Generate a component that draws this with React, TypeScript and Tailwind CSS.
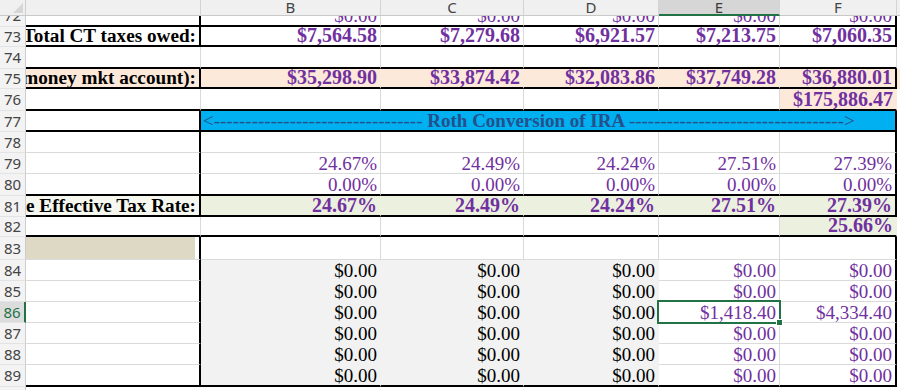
import React from "react";

const RT = "border-r border-r-[#dadada]";
const RK = "border-r-2 border-r-black";
const RF = "border-r border-r-transparent";
const BT = "border-b border-b-[#dadada]";
const BK = "border-b-2 border-b-black";
const BF = "border-b border-b-transparent";

const WA = "w-[175px]";
const WB = "w-[180px]";
const WC = "w-[143px]";
const WD = "w-[135px]";
const WE = "w-[121px]";
const WF = "w-[117px]";
const WG = "w-[3px]";

const PEACH = "bg-[#fde9d9]";
const GREEN = "bg-[#ebf1de]";
const GRAY = "bg-[#f2f2f2]";

type CellProps = {
  w: string;
  r: string;
  b: string;
  bg?: string;
  text?: string;
  bold?: boolean;
  label?: boolean;
  purple?: boolean;
  clip?: boolean;
  children?: React.ReactNode;
};

function Cell({ w, r, b, bg = "bg-white", text, bold, label, purple, clip = true, children }: CellProps) {
  const size = label ? "text-[19.2px] font-bold" : bold ? "text-[20px] font-bold" : "text-[19px] font-normal";
  return (
    <div
      className={`${w} ${r} ${b} ${bg} ${clip ? "overflow-hidden" : "overflow-visible"} relative shrink-0 h-full box-border flex items-end justify-end whitespace-nowrap pr-[3px] font-['Liberation_Serif','Times_New_Roman',serif]`}
    >
      {text && (
        <span className={`shrink-0 leading-[19px] ${size} ${purple ? "text-[#7030a0]" : "text-black"}`}>{text}</span>
      )}
      {children}
    </div>
  );
}

type RowProps = {
  n: string;
  h: string;
  sel?: boolean;
  clip?: boolean;
  children?: React.ReactNode;
};

function Row({ n, h, sel, clip, children }: RowProps) {
  const head = sel
    ? "bg-[#dcdcdc] border-r-2 border-r-[#217346] text-[#217346]"
    : "bg-[#f3f3f3] border-r border-r-[#cdcdcd] text-[#444444]";
  return (
    <div className={`flex ${h}`}>
      <div
        className={`w-[26px] shrink-0 h-full box-border flex justify-center overflow-hidden border-b border-b-[#e3e3e3] ${head} ${
          clip ? "items-end" : "items-center"
        }`}
      >
        <span className="shrink-0 h-[21px] leading-[21px] text-[15px] font-['Noto_Sans','Open_Sans',sans-serif]">
          {n}
        </span>
      </div>
      {children}
    </div>
  );
}

function G({ bg = "bg-white" }: { bg?: string }) {
  return <div className={`${WG} ${bg} shrink-0 h-full`} />;
}

const HEAD = [
  { w: WA, l: "", sel: false },
  { w: WB, l: "B", sel: false },
  { w: WC, l: "C", sel: false },
  { w: WD, l: "D", sel: false },
  { w: WE, l: "E", sel: true },
  { w: WF, l: "F", sel: false },
];

export default function App() {
  const dash = "-";
  return (
    <div className="w-[900px] h-[390px] overflow-hidden bg-white flex flex-col">
      {/* column header */}
      <div className="flex h-[16px] shrink-0">
        <div className="w-[26px] shrink-0 h-full box-border bg-[#f0f0f0] border-r border-r-[#cdcdcd] border-b border-b-[#c8c8c8]">
          <svg width="26" height="15" viewBox="0 0 26 15">
            <polygon points="23,3 23,13 13,13" fill="#d6d6d6" />
          </svg>
        </div>
        {HEAD.map((c, i) => (
          <div
            key={i}
            className={`${c.w} shrink-0 h-full box-border flex items-center justify-center overflow-hidden border-r border-r-[#d4d4d4] text-[15px] leading-[15px] font-['Noto_Sans','Open_Sans',sans-serif] ${
              c.sel
                ? "bg-[#d6d6d6] border-b-2 border-b-[#217346] text-[#3b3b3b]"
                : "bg-[#f0f0f0] border-b border-b-[#c8c8c8] text-[#444444]"
            }`}
          >
            {c.l}
          </div>
        ))}
        <div className={`${WG} shrink-0 h-full box-border bg-[#f0f0f0] border-b border-b-[#c8c8c8]`} />
      </div>

      {/* 72 */}
      <Row n="72" h="h-[11px]" clip>
        <Cell w={WA} r={RK} b={BK} />
        <Cell w={WB} r={RT} b={BK} text="$0.00" purple />
        <Cell w={WC} r={RT} b={BK} text="$0.00" purple />
        <Cell w={WD} r={RT} b={BK} text="$0.00" purple />
        <Cell w={WE} r={RT} b={BK} text="$0.00" purple />
        <Cell w={WF} r={RK} b={BK} text="$0.00" purple />
        <G />
      </Row>

      {/* 73 */}
      <Row n="73" h="h-[20px]">
        <Cell w={WA} r={RK} b={BK} text="Total CT taxes owed:" label />
        <Cell w={WB} r={RT} b={BK} text="$7,564.58" bold purple />
        <Cell w={WC} r={RT} b={BK} text="$7,279.68" bold purple />
        <Cell w={WD} r={RT} b={BK} text="$6,921.57" bold purple />
        <Cell w={WE} r={RT} b={BK} text="$7,213.75" bold purple />
        <Cell w={WF} r={RK} b={BK} text="$7,060.35" bold purple />
        <G />
      </Row>

      {/* 74 */}
      <Row n="74" h="h-[22px]">
        <Cell w={WA} r={RT} b={BK} />
        <Cell w={WB} r={RT} b={BK} />
        <Cell w={WC} r={RT} b={BK} />
        <Cell w={WD} r={RT} b={BK} />
        <Cell w={WE} r={RT} b={BK} />
        <Cell w={WF} r={RT} b={BK} />
        <G />
      </Row>

      {/* 75 */}
      <Row n="75" h="h-[20px]">
        <Cell w={WA} r={RK} b={BK} bg={PEACH} text="money mkt account):" label />
        <Cell w={WB} r={RF} b={BK} bg={PEACH} text="$35,298.90" bold purple />
        <Cell w={WC} r={RF} b={BK} bg={PEACH} text="$33,874.42" bold purple />
        <Cell w={WD} r={RF} b={BK} bg={PEACH} text="$32,083.86" bold purple />
        <Cell w={WE} r={RF} b={BK} bg={PEACH} text="$37,749.28" bold purple />
        <Cell w={WF} r={RK} b={BK} bg={PEACH} text="$36,880.01" bold purple />
        <G bg={PEACH} />
      </Row>

      {/* 76 */}
      <Row n="76" h="h-[22px]">
        <Cell w={WA} r={RT} b={BK} />
        <Cell w={WB} r={RT} b={BK} />
        <Cell w={WC} r={RT} b={BK} />
        <Cell w={WD} r={RT} b={BK} />
        <Cell w={WE} r={RT} b={BK} />
        <Cell w={WF} r={RF} b={BK} bg={PEACH} text="$175,886.47" bold purple />
        <G />
      </Row>

      {/* 77 */}
      <Row n="77" h="h-[21px]">
        <Cell w={WA} r={RK} b={BK} />
        <div className="w-[696px] shrink-0 h-full box-border border-r-2 border-r-black border-b-2 border-b-black bg-[#00b0f0] flex items-end overflow-hidden whitespace-pre pl-[2px] text-[#24508c] text-[19px] leading-[19px] font-['Liberation_Serif','Times_New_Roman',serif]">
          <span>{"<" + dash.repeat(33)}</span>
          <span className="font-bold">{" Roth Conversion of IRA "}</span>
          <span>{dash.repeat(34) + ">"}</span>
        </div>
        <G />
      </Row>

      {/* 78 */}
      <Row n="78" h="h-[21px]">
        <Cell w={WA} r={RK} b={BT} />
        <Cell w={WB} r={RT} b={BT} />
        <Cell w={WC} r={RT} b={BT} />
        <Cell w={WD} r={RT} b={BT} />
        <Cell w={WE} r={RT} b={BT} />
        <Cell w={WF} r={RK} b={BT} />
        <G />
      </Row>

      {/* 79 */}
      <Row n="79" h="h-[21px]">
        <Cell w={WA} r={RK} b={BT} />
        <Cell w={WB} r={RT} b={BT} text="24.67%" purple />
        <Cell w={WC} r={RT} b={BT} text="24.49%" purple />
        <Cell w={WD} r={RT} b={BT} text="24.24%" purple />
        <Cell w={WE} r={RT} b={BT} text="27.51%" purple />
        <Cell w={WF} r={RK} b={BT} text="27.39%" purple />
        <G />
      </Row>

      {/* 80 */}
      <Row n="80" h="h-[22px]">
        <Cell w={WA} r={RK} b={BK} />
        <Cell w={WB} r={RT} b={BK} text="0.00%" purple />
        <Cell w={WC} r={RT} b={BK} text="0.00%" purple />
        <Cell w={WD} r={RT} b={BK} text="0.00%" purple />
        <Cell w={WE} r={RT} b={BK} text="0.00%" purple />
        <Cell w={WF} r={RK} b={BK} text="0.00%" purple />
        <G />
      </Row>

      {/* 81 */}
      <Row n="81" h="h-[21px]">
        <Cell w={WA} r={RK} b={BK} bg="bg-[#f6f8f0]" text="e Effective Tax Rate:" label />
        <Cell w={WB} r={RF} b={BK} bg={GREEN} text="24.67%" bold purple />
        <Cell w={WC} r={RF} b={BK} bg={GREEN} text="24.49%" bold purple />
        <Cell w={WD} r={RF} b={BK} bg={GREEN} text="24.24%" bold purple />
        <Cell w={WE} r={RF} b={BK} bg={GREEN} text="27.51%" bold purple />
        <Cell w={WF} r={RK} b={BK} bg={GREEN} text="27.39%" bold purple />
        <G />
      </Row>

      {/* 82 */}
      <Row n="82" h="h-[20px]">
        <Cell w={WA} r={RT} b={BK} />
        <Cell w={WB} r={RT} b={BK} />
        <Cell w={WC} r={RT} b={BK} />
        <Cell w={WD} r={RT} b={BK} />
        <Cell w={WE} r={RT} b={BK} />
        <Cell w={WF} r={RF} b={BK} bg={GREEN} text="25.66%" bold purple />
        <G />
      </Row>

      {/* 83 */}
      <Row n="83" h="h-[23px]">
        <Cell w={WA} r={RK} b={BT}>
          <div className="absolute left-0 top-0 bottom-0 w-[169px] bg-[#ddd9c4]" />
        </Cell>
        <Cell w={WB} r={RT} b={BT} />
        <Cell w={WC} r={RT} b={BT} />
        <Cell w={WD} r={RT} b={BT} />
        <Cell w={WE} r={RT} b={BT} />
        <Cell w={WF} r={RK} b={BT} />
        <G />
      </Row>

      {/* 84 - 89 */}
      {[
        { n: "84", e: "$0.00", f: "$0.00" },
        { n: "85", e: "$0.00", f: "$0.00" },
        { n: "86", e: "$1,418.40", f: "$4,334.40", sel: true },
        { n: "87", e: "$0.00", f: "$0.00" },
        { n: "88", e: "$0.00", f: "$0.00" },
        { n: "89", e: "$0.00", f: "$0.00", last: true },
      ].map((r) => (
        <Row key={r.n} n={r.n} h={r.last ? "h-[22px]" : "h-[21px]"} sel={r.sel}>
          <Cell w={WA} r={RK} b={r.last ? BK : BT} />
          <Cell w={WB} r={RF} b={r.last ? BK : BF} bg={GRAY} text="$0.00" />
          <Cell w={WC} r={RF} b={r.last ? BK : BF} bg={GRAY} text="$0.00" />
          <Cell w={WD} r={RF} b={r.last ? BK : BF} bg={GRAY} text="$0.00" />
          <Cell w={WE} r={RT} b={r.last ? BK : BT} text={r.e} purple clip={!r.sel}>
            {r.sel && (
              <>
                <div className="absolute -left-[2px] -top-[2px] w-[124px] h-[24px] border-2 border-[#217346] z-10" />
                <div className="absolute -right-[4px] -bottom-[4px] w-[7px] h-[7px] bg-[#217346] border border-white z-20" />
              </>
            )}
          </Cell>
          <Cell w={WF} r={RK} b={r.last ? BK : BT} text={r.f} purple />
          <G />
        </Row>
      ))}

      {/* tail */}
      <div className="flex h-[3px]">
        <div className="w-[26px] shrink-0 h-full bg-[#f3f3f3] border-r border-r-[#cdcdcd] box-border" />
        <div className="flex-1 h-full bg-white" />
      </div>
    </div>
  );
}
